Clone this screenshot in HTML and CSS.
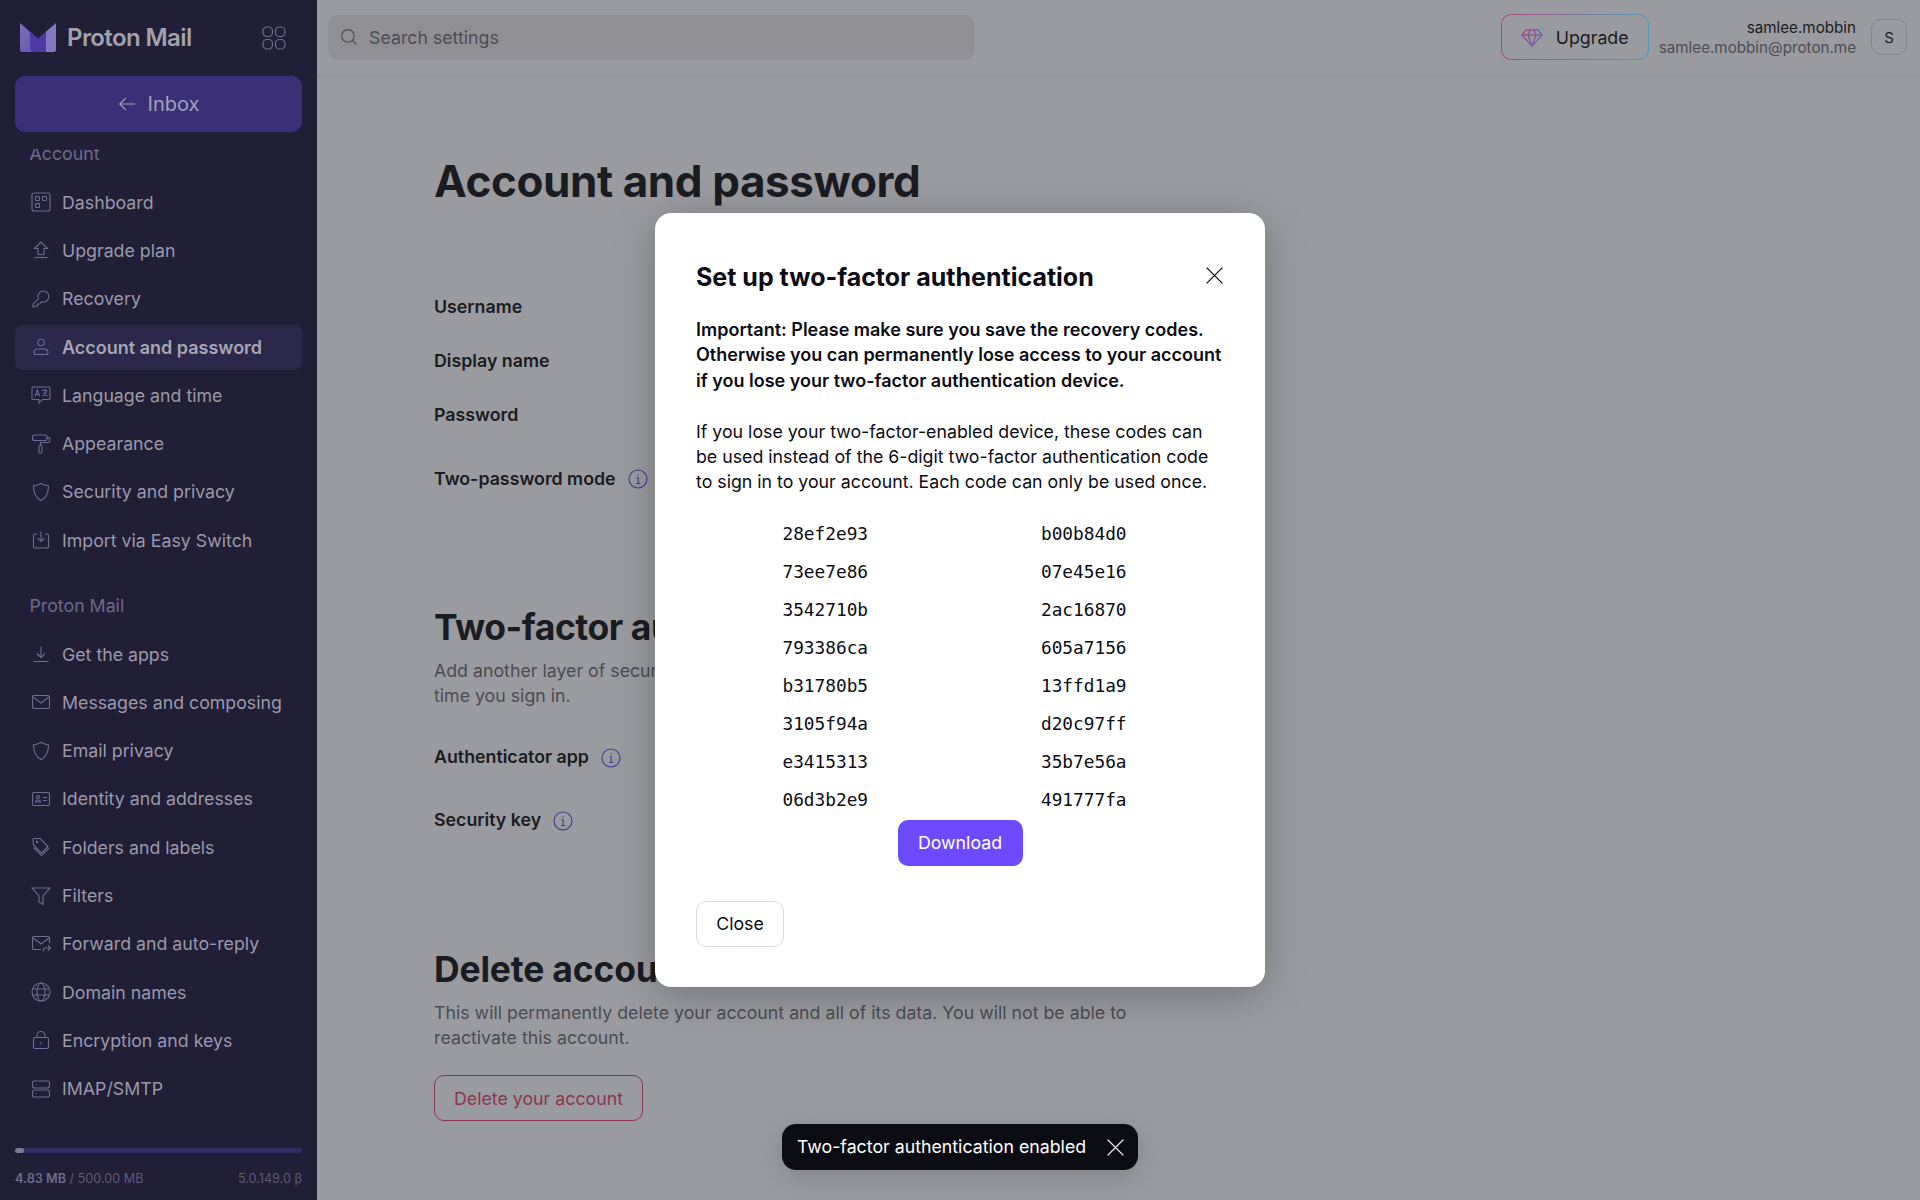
FILE: index.html
```html
<!DOCTYPE html>
<html lang="en">
<head>
    <meta charset="UTF-8">
    <title>Account and password - Proton Mail</title>
    <link rel="stylesheet" href="styles.css">
</head>
<body>
    <svg class="sprites" aria-hidden="true">
        <symbol id="i-dashboard" viewBox="0 0 20 20"><rect x="1" y="1" width="18" height="18" rx="2"/><rect x="4.500" y="4.500" width="4" height="4" rx=".8"/><rect x="11.500" y="4.500" width="4" height="4" rx=".8"/><rect x="4.500" y="11.500" width="4" height="4" rx=".8"/></symbol>
        <symbol id="i-upgrade" viewBox="0 0 20 20"><path d="M10 2 3.500 8.500H7v6h6v-6h3.500L10 2Z"/><path d="M3.500 17.500h13"/></symbol>
        <symbol id="i-key" viewBox="0 0 20 20"><path d="M12.500 2a5.500 5.500 0 1 1-1.900 10.700L8.500 15H6.500v2H4.500l-1.200 1H2v-2.800l5.400-5.400A5.500 5.500 0 0 1 12.500 2Z"/></symbol>
        <symbol id="i-user" viewBox="0 0 20 20"><circle cx="10" cy="5.500" r="3.200"/><path d="M3 15.500c0-2.200 1.800-3.500 4-3.500h6c2.200 0 4 1.300 4 3.500 0 1.200-.8 2-2 2H5c-1.200 0-2-.8-2-2Z"/></symbol>
        <symbol id="i-lang" viewBox="0 0 20 20"><path d="M2 2h16a1 1 0 0 1 1 1v10.500a1 1 0 0 1-1 1h-6.500l-3.500 3.500v-3.500H2a1 1 0 0 1-1-1V3a1 1 0 0 1 1-1Z"/><path d="m4 11.500 2.300-6.500 2.300 6.500M4.900 9.500h2.800M11 5.500h5.500M13.700 4v1.500M15.500 5.500c-.5 2.500-2 4.500-4 5.500M12.500 7.500c.7 1.500 2 3 4 3.700"/></symbol>
        <symbol id="i-roller" viewBox="0 0 20 20"><rect x="1.500" y="1" width="14.500" height="5.500" rx="2"/><path d="M16 3.500h1.500a1 1 0 0 1 1 1v3a1 1 0 0 1-1 1H9.500v3"/><rect x="8" y="11.500" width="3" height="7.500" rx="1.200"/></symbol>
        <symbol id="i-shield" viewBox="0 0 20 20"><path d="M10 1.500c2.500 1.300 5 2 7.500 2.200 0 6.500-1.500 11.800-7.500 14.800C4 15.500 2.500 10.200 2.500 3.700 5 3.500 7.500 2.800 10 1.500Z"/></symbol>
        <symbol id="i-import" viewBox="0 0 20 20"><path d="M6 4H4a1.500 1.500 0 0 0-1.500 1.500v11A1.500 1.500 0 0 0 4 18h12a1.500 1.500 0 0 0 1.500-1.500v-11A1.500 1.500 0 0 0 16 4h-2"/><path d="M10 1.500v10M6.500 8l3.500 3.500L13.500 8"/></symbol>
        <symbol id="i-download" viewBox="0 0 20 20"><path d="M10 2.500v11M6 9.500l4 4 4-4M2.500 17.500h15"/></symbol>
        <symbol id="i-mail" viewBox="0 0 20 20"><rect x="1.500" y="3.500" width="17" height="13" rx="1.500"/><path d="m2 5 8 6 8-6"/></symbol>
        <symbol id="i-identity" viewBox="0 0 20 20"><rect x="1.500" y="3.500" width="17" height="13" rx="1.500"/><circle cx="7" cy="8" r="1.500"/><path d="M4.500 13c0-1.500 1-2 2.500-2s2.500.5 2.500 2ZM12 8.500h4M12 11.500h4"/></symbol>
        <symbol id="i-tag" viewBox="0 0 20 20"><path d="M3 1.500h6l8 8-6.500 6.500-8-8-.5-5.500a1 1 0 0 1 1-1Z"/><path d="m2.500 10.500 8 8 7.500-7.500"/><circle cx="6" cy="5" r=".8"/></symbol>
        <symbol id="i-filter" viewBox="0 0 20 20"><path d="M1 2h18l-7 8v8.500l-4-2.500v-6L1 2Z"/></symbol>
        <symbol id="i-forward" viewBox="0 0 20 20"><path d="M18.500 9V4a1.500 1.500 0 0 0-1.500-1.500H3A1.500 1.500 0 0 0 1.500 4v10A1.500 1.500 0 0 0 3 15.500h7"/><path d="m2 4 8 6 8-6M12.500 17.500v-1.500a2 2 0 0 1 2-2h5M17 11.500l2.500 2.500-2.500 2.500"/></symbol>
        <symbol id="i-globe" viewBox="0 0 20 20"><circle cx="10" cy="10" r="9"/><ellipse cx="10" cy="10" rx="4" ry="9"/><path d="M1.500 7h17M1.500 13h17"/></symbol>
        <symbol id="i-lock" viewBox="0 0 20 20"><rect x="2.500" y="7.500" width="15" height="11" rx="1.500"/><path d="M6 7.500V5.500a4 4 0 0 1 8 0v2M10 12v2.500"/></symbol>
        <symbol id="i-server" viewBox="0 0 20 20"><rect x="1.500" y="2" width="17" height="7" rx="2"/><rect x="1.500" y="11" width="17" height="7" rx="2"/><path d="M4.500 5.500h1M4.500 14.500h1"/></symbol>
        <symbol id="i-info" viewBox="0 0 20 20"><circle cx="10" cy="10" r="9"/><path d="M8.500 8.800H10.200V14.500M8.300 14.500h3.800M10 5.200v1.200"/></symbol>
        <symbol id="i-close" viewBox="0 0 20 20"><path d="M2.500 2.500l15 15M17.500 2.500l-15 15"/></symbol>
    </svg>

    <aside class="sidebar">
        <div class="brand">
            <svg class="brand-logo" viewBox="0 0 36 29">
                <defs>
                    <linearGradient id="logoLeft" x1="0" y1="0" x2="1" y2="1"><stop offset="0" stop-color="#7c70bb"/><stop offset="1" stop-color="#5f4fae"/></linearGradient>
                </defs>
                <path fill="url(#logoLeft)" d="M0 0 13 11.500 18 15.500 24 29H2a2 2 0 0 1-2-2V0Z"/>
                <path fill="#8378bd" d="M36 0v27a2 2 0 0 1-2 2h-8V8.500L36 0Z"/>
                <path fill="#4e3aa3" d="M10 9 18 15.500 26 8.500V29H14a4 4 0 0 1-4-4V9Z"/>
            </svg>
            <span class="brand-name">Proton Mail</span>
            <svg class="apps-icon" viewBox="0 0 24 24"><rect x="1" y="1" width="9.500" height="9.500" rx="4"/><rect x="13.500" y="1" width="9.500" height="9.500" rx="4"/><rect x="1" y="13.500" width="9.500" height="9.500" rx="4"/><rect x="13.500" y="13.500" width="9.500" height="9.500" rx="4"/></svg>
        </div>
        <button class="inbox-btn">
            <svg viewBox="0 0 20 20"><path d="M19 10H2M8.500 3.500 2 10l6.500 6.500"/></svg>
            Inbox
        </button>
        <nav class="nav">
            <div class="nav-inner">
                <div class="nav-title">Account</div>
                <a class="nav-item"><svg><use href="#i-dashboard"/></svg>Dashboard</a>
                <a class="nav-item"><svg><use href="#i-upgrade"/></svg>Upgrade plan</a>
                <a class="nav-item"><svg><use href="#i-key"/></svg>Recovery</a>
                <a class="nav-item active"><svg><use href="#i-user"/></svg>Account and password</a>
                <a class="nav-item"><svg><use href="#i-lang"/></svg>Language and time</a>
                <a class="nav-item"><svg><use href="#i-roller"/></svg>Appearance</a>
                <a class="nav-item"><svg><use href="#i-shield"/></svg>Security and privacy</a>
                <a class="nav-item"><svg><use href="#i-import"/></svg>Import via Easy Switch</a>
                <div class="nav-title second">Proton Mail</div>
                <a class="nav-item"><svg><use href="#i-download"/></svg>Get the apps</a>
                <a class="nav-item"><svg><use href="#i-mail"/></svg>Messages and composing</a>
                <a class="nav-item"><svg><use href="#i-shield"/></svg>Email privacy</a>
                <a class="nav-item"><svg><use href="#i-identity"/></svg>Identity and addresses</a>
                <a class="nav-item"><svg><use href="#i-tag"/></svg>Folders and labels</a>
                <a class="nav-item"><svg><use href="#i-filter"/></svg>Filters</a>
                <a class="nav-item"><svg><use href="#i-forward"/></svg>Forward and auto-reply</a>
                <a class="nav-item"><svg><use href="#i-globe"/></svg>Domain names</a>
                <a class="nav-item"><svg><use href="#i-lock"/></svg>Encryption and keys</a>
                <a class="nav-item"><svg><use href="#i-server"/></svg>IMAP/SMTP</a>
            </div>
        </nav>
        <div class="storage">
            <div class="storage-bar"><div class="storage-fill"></div></div>
            <div class="storage-info">
                <span><b>4.83 MB</b> / 500.00 MB</span>
                <span>5.0.149.0 β</span>
            </div>
        </div>
    </aside>

    <div class="main">
        <header class="topbar">
            <div class="search">
                <svg viewBox="0 0 20 20"><circle cx="8.800" cy="8.800" r="7"/><path d="m14 14 4.500 4.500"/></svg>
                <span>Search settings</span>
            </div>
            <button class="upgrade-btn">
                <svg viewBox="0 0 24 22">
                    <defs><linearGradient id="gem" x1="0" y1="0" x2="1" y2="1"><stop offset="0" stop-color="#a8487a"/><stop offset="1" stop-color="#5f6fc0"/></linearGradient></defs>
                    <path class="gem" d="M5 4h12l4 5-10 11L1 9l4-5ZM1 9h20M7 9l4 11 4-11M7 9l2-5M15 9l-2-5"/>
                    <path class="gem-spark" d="M20.500 0v5M18 2.500h5"/>
                </svg>
                Upgrade
            </button>
            <div class="user">
                <div class="user-name">samlee.mobbin</div>
                <div class="user-mail">samlee.mobbin@proton.me</div>
            </div>
            <div class="avatar">S</div>
        </header>

        <div class="content">
            <h1>Account and password</h1>
            <div class="field first">Username</div>
            <div class="field">Display name</div>
            <div class="field">Password</div>
            <div class="field big-gap">Two-password mode <svg class="info"><use href="#i-info"/></svg></div>

            <h2 class="tfa-title">Two-factor authentication</h2>
            <p class="section-text">Add another layer of security to your account. You'll need to verify yourself with 2FA every<br>time you sign in.</p>
            <div class="field app-row">Authenticator app <svg class="info"><use href="#i-info"/></svg></div>
            <div class="field key-row">Security key <svg class="info"><use href="#i-info"/></svg></div>

            <h2 class="delete-title">Delete account</h2>
            <p class="section-text">This will permanently delete your account and all of its data. You will not be able to reactivate this account.</p>
            <button class="delete-btn">Delete your account</button>
        </div>
    </div>

    <div class="modal">
        <div class="modal-head">
            <h3>Set up two-factor authentication</h3>
            <svg class="modal-close"><use href="#i-close"/></svg>
        </div>
        <p class="warn">Important: Please make sure you save the recovery codes. Otherwise you can permanently lose access to your account if you lose your two-factor authentication device.</p>
        <p class="explain">If you lose your two-factor-enabled device, these codes can be used instead of the 6-digit two-factor authentication code to sign in to your account. Each code can only be used once.</p>
        <div class="codes">
            <span>28ef2e93</span><span>b00b84d0</span>
            <span>73ee7e86</span><span>07e45e16</span>
            <span>3542710b</span><span>2ac16870</span>
            <span>793386ca</span><span>605a7156</span>
            <span>b31780b5</span><span>13ffd1a9</span>
            <span>3105f94a</span><span>d20c97ff</span>
            <span>e3415313</span><span>35b7e56a</span>
            <span>06d3b2e9</span><span>491777fa</span>
        </div>
        <div class="download-row"><button class="download-btn">Download</button></div>
        <div class="modal-foot"><button class="close-btn">Close</button></div>
    </div>

    <div class="toast">
        <span>Two-factor authentication enabled</span>
        <svg><use href="#i-close"/></svg>
    </div>
</body>
</html>
```

FILE: styles.css
```css
* {
    box-sizing: border-box;
}
html, body {
    height: 100%;
}
body {
    margin: 0;
    display: flex;
    overflow: hidden;
    background-color: #9a9ba0;
    color: #1b1b22;
    font-family: Inter, "Liberation Sans", sans-serif;
    font-size: 17.750px;
}
button {
    font-family: inherit;
    font-size: 17.750px;
    cursor: pointer;
}
.sprites {
    display: none;
}

/* sidebar */
.sidebar {
    width: 317px;
    height: 100%;
    flex-shrink: 0;
    display: flex;
    flex-direction: column;
    background-color: #211e38;
    color: #9b99a8;
}
.brand {
    height: 76px;
    flex-shrink: 0;
    display: flex;
    align-items: center;
    padding: 0 31px 1px 20px;
}
.brand-logo {
    width: 36px;
    height: 29px;
    margin-right: 11px;
}
.brand-name {
    flex: 1;
    font-size: 24px;
    font-weight: 600;
    letter-spacing: -0.6px;
    color: #a3a2ab;
}
.apps-icon {
    width: 24px;
    height: 24px;
    fill: none;
    stroke: #6f6c8e;
    stroke-width: 1.200;
}
.inbox-btn {
    flex-shrink: 0;
    height: 56px;
    margin: 0 15px;
    display: flex;
    align-items: center;
    justify-content: center;
    gap: 12px;
    border: none;
    border-radius: 10px;
    background-color: #3b2f77;
    color: #a3a0b9;
    font-size: 20px;
}
.inbox-btn svg {
    width: 18px;
    height: 18px;
    fill: none;
    stroke: #a3a0b9;
    stroke-width: 1.300;
}
.nav {
    flex: 1;
    min-height: 0;
    overflow: hidden;
    padding: 0 15px;
    margin-top: 17px;
}
.nav-inner {
    margin-top: -6.500px;
}
.nav-title {
    height: 22px;
    padding-left: 14.500px;
    line-height: 22px;
    color: #6e6b88;
}
.nav-title.second {
    margin-top: 31px;
}
.nav-item {
    height: 48.300px;
    display: flex;
    align-items: center;
    padding-left: 16px;
    gap: 11px;
    border-radius: 10px;
}
.nav-title + .nav-item {
    margin-top: 13.500px;
}
.nav-title.second + .nav-item {
    margin-top: 12.500px;
}
.nav-item svg {
    width: 20px;
    height: 20px;
    flex-shrink: 0;
    fill: none;
    stroke: #6f6c92;
    stroke-width: 1.100;
}
.nav-item.active {
    font-size: 18px;
    font-weight: 600;
    color: #a7a5b3;
    background: linear-gradient(#2b2849, #2b2849) center / 100% 45px no-repeat;
}
.storage {
    flex-shrink: 0;
    height: 52px;
    padding: 0 15px;
}
.storage-bar {
    height: 5px;
    border-radius: 3px;
    background-color: #332c63;
}
.storage-fill {
    width: 9px;
    height: 5px;
    border-radius: 3px;
    background-color: #7d7a9a;
}
.storage-info {
    display: flex;
    justify-content: space-between;
    margin-top: 18px;
    font-size: 12.650px;
    color: #5f5c78;
}
.storage-info b {
    font-weight: 600;
    color: #6f6c88;
}

/* top bar */
.main {
    flex: 1;
    min-width: 0;
}
.topbar {
    height: 77px;
    display: flex;
    align-items: center;
    padding: 0 13px 2px 11px;
    border-bottom: 1px solid #8f9095;
}
.search {
    width: 647px;
    height: 45px;
    display: flex;
    align-items: center;
    gap: 11px;
    padding-left: 12px;
    border-radius: 10px;
    background-color: #909094;
    color: #4c4c53;
}
.search span {
    padding-top: 1px;
}
.search svg {
    width: 18px;
    height: 18px;
    fill: none;
    stroke: #4c4c53;
    stroke-width: 1.300;
}
.upgrade-btn {
    width: 148px;
    height: 46px;
    margin-left: auto;
    display: flex;
    align-items: center;
    gap: 11px;
    padding-left: 19px;
    border: 1.500px solid transparent;
    border-radius: 10px;
    background: linear-gradient(#9a9ba0, #9a9ba0) padding-box, linear-gradient(90deg, #a84a78, #4f9ab8) border-box;
    color: #1b1b22;
}
.upgrade-btn svg {
    width: 24px;
    height: 22px;
    fill: none;
}
.gem {
    stroke: url(#gem);
    stroke-width: 1.400;
}
.gem-spark {
    stroke: #5ea6c0;
    stroke-width: 1.200;
}
.user {
    margin-left: 10px;
    padding-top: 2px;
    text-align: right;
    font-size: 15.200px;
    line-height: 20px;
}
.user-mail {
    color: #4d4d55;
}
.avatar {
    width: 36px;
    height: 36px;
    margin-left: 15px;
    display: flex;
    align-items: center;
    justify-content: center;
    border: 1px solid #85868b;
    border-radius: 10px;
    font-size: 15px;
}

/* page content */
.content {
    padding: 72px 0 0 117px;
}
h1 {
    margin: 0;
    font-size: 44px;
    line-height: 64px;
    font-weight: 700;
    letter-spacing: -0.400px;
}
h2 {
    margin: 0;
    font-size: 35.500px;
    line-height: 48px;
    font-weight: 700;
    letter-spacing: -0.200px;
}
.field {
    display: flex;
    align-items: center;
    height: 24px;
    margin-top: 30px;
    font-size: 17.800px;
    font-weight: 600;
}
.field.first {
    margin-top: 81px;
}
.field.big-gap {
    margin-top: 40px;
}
.info {
    width: 20px;
    height: 20px;
    margin: 2px 0 0 12px;
    fill: none;
    stroke: #43388f;
    stroke-width: 1.100;
}
.tfa-title {
    margin-top: 114px;
    letter-spacing: -0.450px;
}
.section-text {
    width: 760px;
    margin: 6px 0 0;
    line-height: 25.300px;
    color: #4b4b53;
}
.app-row {
    margin-top: 36px;
}
.key-row {
    margin-top: 39px;
}
.delete-title {
    margin-top: 114px;
}
.delete-btn {
    width: 209px;
    height: 46px;
    margin-top: 25px;
    border: 1px solid #8a3550;
    border-radius: 10px;
    background: none;
    color: #8a3550;
}

/* modal */
.modal {
    position: absolute;
    top: 213px;
    left: 655px;
    width: 610px;
    height: 774px;
    padding: 41px;
    border-radius: 16px;
    background-color: #fff;
    color: #0c0c14;
    box-shadow: 0 8px 40px rgba(0, 0, 0, 0.25);
}
.modal-head {
    display: flex;
    align-items: center;
    justify-content: space-between;
    height: 46px;
}
.modal-head h3 {
    margin: 0;
    font-size: 25px;
    font-weight: 700;
}
.modal-close {
    width: 21px;
    height: 21px;
    margin: -3px -1px 0 0;
    fill: none;
    stroke: #0c0c14;
    stroke-width: 1.200;
}
.modal p {
    margin: 0;
    line-height: 25.300px;
}
.modal .warn {
    margin-top: 17px;
    font-size: 18px;
    font-weight: 600;
}
.modal .explain {
    margin-top: 26px;
}
.codes {
    width: 517px;
    margin-top: 20px;
    display: grid;
    grid-template-columns: 1fr 1fr;
    grid-auto-rows: 38px;
    justify-items: center;
    align-items: center;
    font-family: "DejaVu Sans Mono", monospace;
    font-size: 17.800px;
}
.download-row {
    display: flex;
    justify-content: center;
    margin-top: 1px;
}
.download-btn {
    width: 125px;
    height: 46px;
    border: none;
    border-radius: 10px;
    background-color: #6d4aff;
    color: #fff;
}
.modal-foot {
    margin-top: 35px;
}
.close-btn {
    width: 88px;
    height: 46px;
    border: 1px solid #dedede;
    border-radius: 10px;
    background-color: #fff;
    color: #0c0c14;
}

/* toast */
.toast {
    position: absolute;
    top: 1124px;
    left: 782px;
    width: 356px;
    height: 46px;
    display: flex;
    align-items: center;
    justify-content: space-between;
    padding: 0 12px 0 15px;
    border-radius: 14px;
    background-color: #0c0c14;
    color: #fff;
    box-shadow: 0 8px 30px rgba(0, 0, 0, 0.15);
}
.toast span {
    padding-bottom: 2px;
}
.toast svg {
    width: 21px;
    height: 21px;
    fill: none;
    stroke: #fff;
    stroke-width: 1.200;
}
```
